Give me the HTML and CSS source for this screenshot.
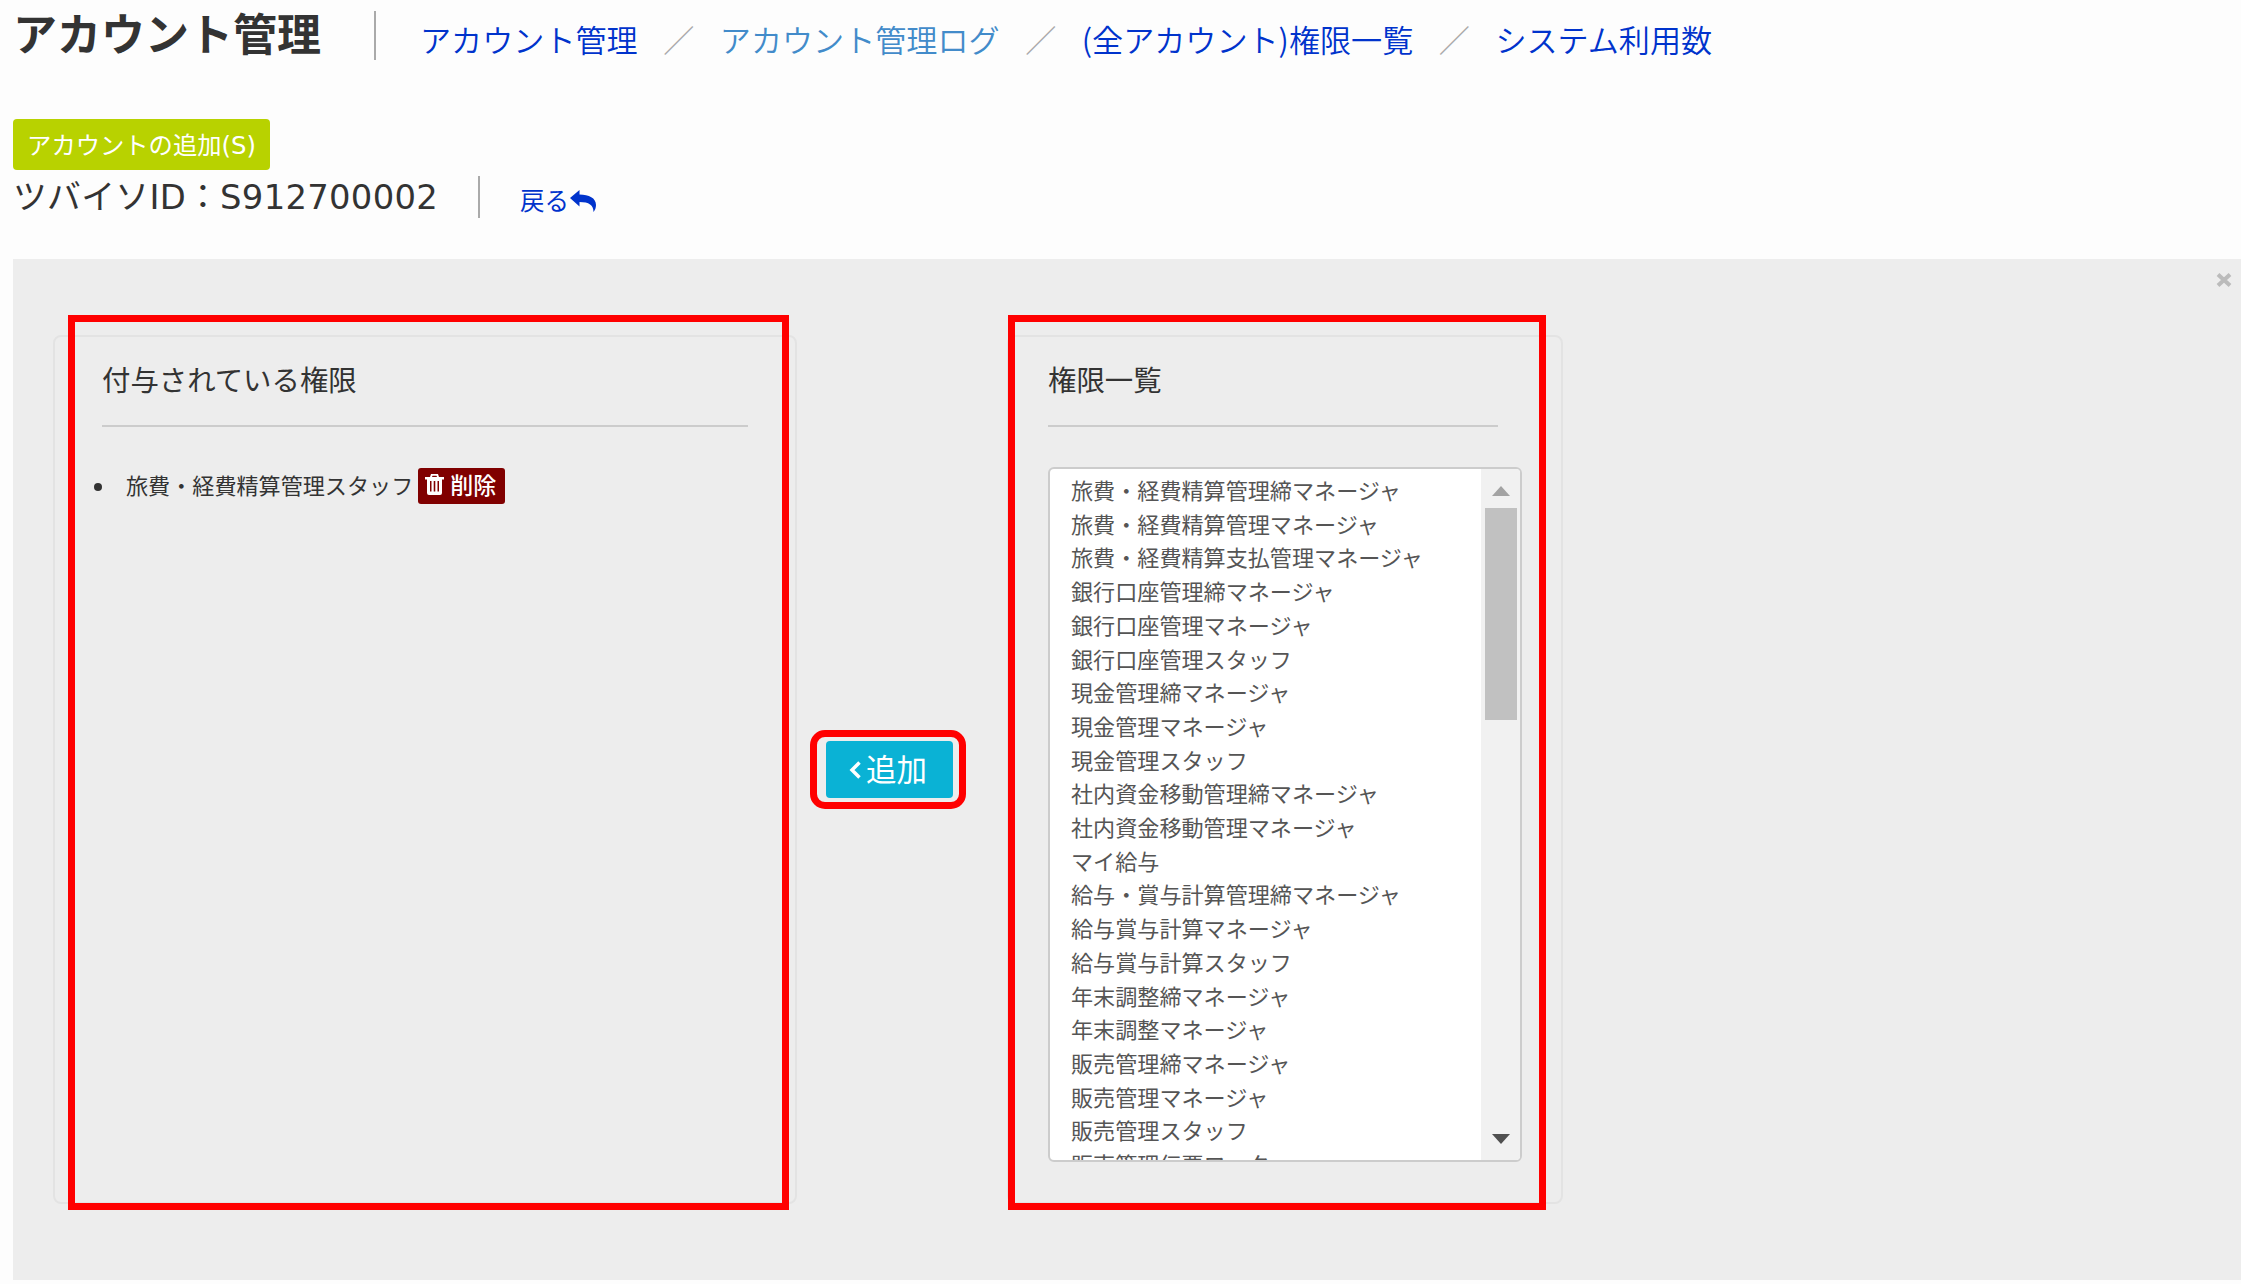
FILE: index.html
```html
<!DOCTYPE html>
<html lang="ja">
<head>
    <meta charset="UTF-8">
    <meta name="viewport" content="width=device-width, initial-scale=1.0">
    <title>アカウント管理</title>
    <link rel="stylesheet" href="styles.css">
</head>
<body>
    <!-- Page header -->
    <header class="page-header">
        <h1>アカウント管理</h1>
        <nav class="sub-nav">
            <a href="#">アカウント管理</a>
            <span class="slash">／</span>
            <a href="#" class="visited">アカウント管理ログ</a>
            <span class="slash">／</span>
            <a href="#">(全アカウント)権限一覧</a>
            <span class="slash">／</span>
            <a href="#">システム利用数</a>
        </nav>
    </header>

    <button type="button" class="btn-new">アカウントの追加(S)</button>

    <div class="account-row">
        <h2>ツバイソID：S912700002</h2>
        <a href="#" class="back-link">戻る<svg class="icon-reply" viewBox="0 0 26 22"><path d="M0 8 L9.500 0 V4.500 C19 4.500 26 8 26 15 C26 18 25 20 23.500 22 C23.500 15 19 12 9.500 12 V16.500 Z"/></svg></a>
    </div>

    <!-- Permission panel -->
    <main class="panel">
        <svg class="icon-close" viewBox="0 0 16 14"><path d="M2 1.500 L14 12.500 M14 1.500 L2 12.500"/></svg>

        <section class="well well-granted">
            <h3>付与されている権限</h3>
            <ul class="granted-list">
                <li><span class="granted-name">旅費・経費精算管理スタッフ</span><button type="button" class="btn-delete"><svg class="icon-trash" viewBox="0 0 19 21"><path fill-rule="evenodd" d="M6 0 H13 L14 3 H19 V5.500 H17 V19 Q17 21 15 21 H4 Q2 21 2 19 V5.500 H0 V3 H5 Z M7.500 1.800 L7 3 H12 L11.500 1.800 Z M5 7 V17.500 H6.500 V7 Z M8.700 7 V17.500 H10.300 V7 Z M12.500 7 V17.500 H14 V7 Z"/></svg>削除</button></li>
            </ul>
            <div class="mark mark-granted"></div>
        </section>

        <div class="add-frame">
            <button type="button" class="btn-add"><svg class="icon-left" viewBox="0 0 12 18"><path d="M10.500 1.500 L3 9 L10.500 16.500"/></svg>追加</button>
        </div>

        <section class="well well-all">
            <h3>権限一覧</h3>
            <div class="select-box">
                <ul class="options">
                    <li>旅費・経費精算管理締マネージャ</li>
                    <li>旅費・経費精算管理マネージャ</li>
                    <li>旅費・経費精算支払管理マネージャ</li>
                    <li>銀行口座管理締マネージャ</li>
                    <li>銀行口座管理マネージャ</li>
                    <li>銀行口座管理スタッフ</li>
                    <li>現金管理締マネージャ</li>
                    <li>現金管理マネージャ</li>
                    <li>現金管理スタッフ</li>
                    <li>社内資金移動管理締マネージャ</li>
                    <li>社内資金移動管理マネージャ</li>
                    <li>マイ給与</li>
                    <li>給与・賞与計算管理締マネージャ</li>
                    <li>給与賞与計算マネージャ</li>
                    <li>給与賞与計算スタッフ</li>
                    <li>年末調整締マネージャ</li>
                    <li>年末調整マネージャ</li>
                    <li>販売管理締マネージャ</li>
                    <li>販売管理マネージャ</li>
                    <li>販売管理スタッフ</li>
                    <li>販売管理伝票ワーク</li>
                </ul>
                <div class="scrollbar">
                    <svg class="arrow arrow-up" viewBox="0 0 18 10"><path d="M0 10 L9 0 L18 10 Z"/></svg>
                    <div class="thumb"></div>
                    <svg class="arrow arrow-down" viewBox="0 0 18 10"><path d="M0 0 L9 10 L18 0 Z"/></svg>
                </div>
            </div>
            <div class="mark mark-all"></div>
        </section>
    </main>
</body>
</html>
```
FILE: styles.css
```css
* {
    box-sizing: border-box;
}
body {
    margin: 0;
    height: 1284px;
    padding-left: 13px;
    background-color: #fdfdfd;
    color: #333;
    font-family: "DejaVu Sans", "Noto Sans CJK JP", sans-serif;
    display: flex;
    flex-direction: column;
    overflow: hidden;
    white-space: nowrap;
}
h1, h2, h3, ul {
    margin: 0;
    padding: 0;
}
a {
    color: #0033cc;
    text-decoration: none;
}
button {
    border: none;
    color: #fff;
    font-family: inherit;
    padding: 0;
}

/* Header */
.page-header {
    display: flex;
    height: 119px;
    padding-top: 11px;
}
h1 {
    width: 363px;
    height: 49px;
    border-right: 2px solid #aaa;
    font-size: 44px;
    line-height: 49px;
}
.sub-nav {
    display: flex;
    margin-left: 44px;
    height: 60px;
    font-family: "Noto Sans CJK JP", sans-serif;
    font-size: 31.100px;
    font-weight: 350;
    line-height: 55px;
}
.sub-nav .visited {
    color: #428bca;
}
.slash {
    margin: 0 25.500px;
    color: #aaa;
}
.btn-new {
    width: 257px;
    height: 51px;
    padding-bottom: 3px;
    border-radius: 4px;
    background-color: #b8d200;
    font-size: 24.300px;
}

/* Account id */
.account-row {
    display: flex;
    height: 89px;
    padding-top: 6px;
}
h2 {
    width: 467px;
    height: 42px;
    border-right: 2px solid #aaa;
    font-size: 33.800px;
    font-weight: normal;
    letter-spacing: 0.300px;
    line-height: 43px;
}
.back-link {
    display: flex;
    align-items: center;
    height: 46px;
    margin-left: 40px;
    font-size: 24.500px;
}
.icon-reply {
    width: 26px;
    height: 22px;
    margin: 3px 0 0 1px;
    fill: #0033cc;
}

/* Panel */
.panel {
    position: relative;
    display: flex;
    height: 1021px;
    padding: 76px 0 0 40px;
    background-color: #ededed;
}
.icon-close {
    position: absolute;
    top: 14px;
    right: 9px;
    width: 16px;
    height: 14px;
    fill: none;
    stroke: #bbb;
    stroke-width: 4;
}
.well {
    position: relative;
    height: 869px;
    padding: 23px 47px 0;
    border: 2px solid #e3e3e3;
    border-radius: 8px;
}
.well-granted {
    width: 744px;
}
.well-all {
    width: 556px;
    margin-left: 41px;
    padding: 23px 39px 0;
}
h3 {
    height: 67px;
    border-bottom: 2px solid #ccc;
    font-size: 28.400px;
    font-weight: normal;
    line-height: 44px;
}
.well-all h3 {
    width: 450px;
}
.granted-list {
    margin-top: 40px;
    padding-left: 24px;
    font-size: 22.100px;
}
.granted-list li {
    display: flex;
    align-items: center;
    height: 38px;
}
.granted-list li::before {
    content: "";
    width: 8px;
    height: 8px;
    margin: 2px 24px 0 -32px;
    border-radius: 50%;
    background-color: #333;
}
.granted-name {
    padding-bottom: 4px;
}
.btn-delete {
    display: flex;
    align-items: center;
    width: 87px;
    height: 36px;
    margin-left: 5px;
    padding: 0 0 4px 7px;
    border-radius: 3px;
    background-color: #800000;
    font-family: "Noto Sans CJK JP", sans-serif;
    font-size: 23px;
    font-weight: 500;
}
.icon-trash {
    width: 19px;
    height: 21px;
    margin-right: 6px;
    fill: #fff;
}

/* Add button */
.add-frame {
    width: 156px;
    height: 79px;
    margin: 395px 0 0 13px;
    padding: 4px 0 0 9px;
    border: 7px solid #ff0000;
    border-radius: 15px;
}
.btn-add {
    display: flex;
    align-items: center;
    width: 127px;
    height: 57px;
    padding: 0 0 3px 23px;
    border-radius: 4px;
    background-color: #0ab2d5;
    font-size: 30.500px;
}
.icon-left {
    width: 12px;
    height: 18px;
    margin: 3px 5px 0 0;
    fill: none;
    stroke: #fff;
    stroke-width: 3.500;
}

/* Permission list */
.select-box {
    display: flex;
    width: 474px;
    height: 695px;
    margin-top: 40px;
    border: 2px solid #ccc;
    border-radius: 6px;
    background-color: #fff;
    overflow: hidden;
}
.options {
    flex: 1;
    padding: 6px 0 0 21px;
    color: #555;
    font-size: 22.100px;
    line-height: 33.700px;
    list-style: none;
}
.scrollbar {
    display: flex;
    flex-direction: column;
    align-items: center;
    width: 39px;
    padding: 17px 0 16px;
    background-color: #f1f1f1;
}
.arrow {
    width: 18px;
    height: 10px;
}
.arrow-up {
    fill: #a3a3a3;
}
.arrow-down {
    margin-top: auto;
    fill: #505050;
}
.thumb {
    width: 32px;
    height: 212px;
    margin-top: 12px;
    background-color: #c1c1c1;
}

/* Red frames drawn over the wells */
.mark {
    position: absolute;
    top: -22px;
    height: 895px;
    border: 7px solid #ff0000;
}
.mark-granted {
    left: 13px;
    width: 721px;
}
.mark-all {
    left: -1px;
    width: 538px;
}
```
